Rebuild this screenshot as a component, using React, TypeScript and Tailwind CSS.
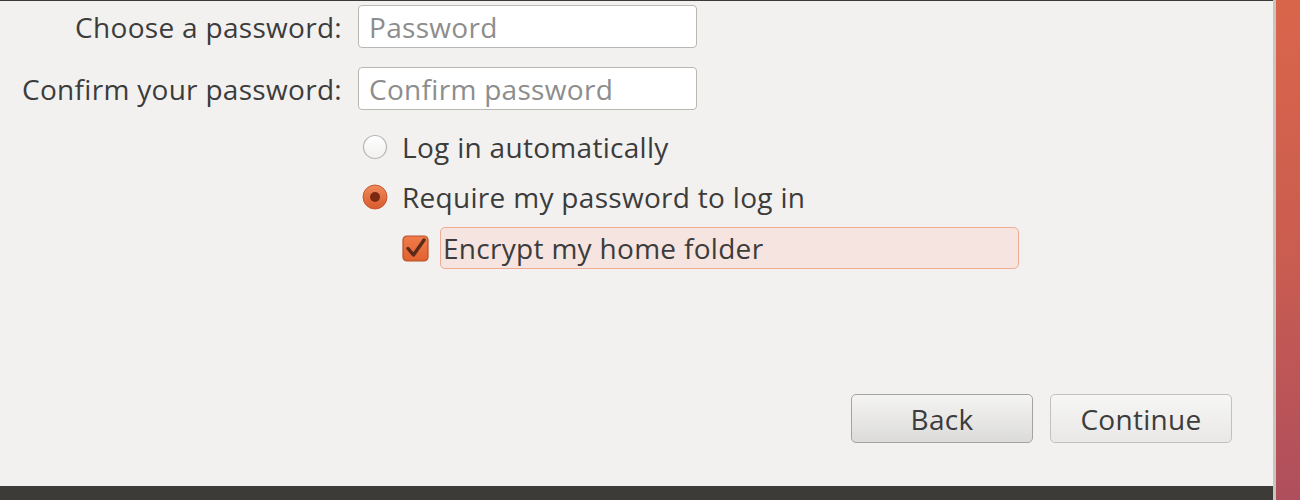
import React from "react";

const font = { fontFamily: '"Open Sans", "Noto Sans", sans-serif' };

function Radio({ checked }: { checked?: boolean }) {
  return checked ? (
    <svg width="26" height="26" viewBox="0 0 26 26">
      <defs>
        <linearGradient id="rg" x1="0" y1="0" x2="0" y2="1">
          <stop offset="0" stopColor="#f08a5e" />
          <stop offset="1" stopColor="#d85a2c" />
        </linearGradient>
      </defs>
      <circle cx="13" cy="13" r="12" fill="url(#rg)" stroke="#c8572d" strokeWidth="1" />
      <circle cx="13" cy="13" r="5" fill="#7b2a12" />
    </svg>
  ) : (
    <svg width="26" height="26" viewBox="0 0 26 26">
      <defs>
        <linearGradient id="wg" x1="0" y1="0" x2="0" y2="1">
          <stop offset="0" stopColor="#ffffff" />
          <stop offset="1" stopColor="#f1f0ef" />
        </linearGradient>
      </defs>
      <circle cx="13" cy="13" r="11.5" fill="url(#wg)" stroke="#b8b6b2" strokeWidth="1.2" />
    </svg>
  );
}

function Checkbox() {
  return (
    <svg width="27" height="27" viewBox="0 0 27 27">
      <defs>
        <linearGradient id="cg" x1="0" y1="0" x2="0" y2="1">
          <stop offset="0" stopColor="#f27b4b" />
          <stop offset="1" stopColor="#e0622f" />
        </linearGradient>
      </defs>
      <rect x="1" y="1" width="25" height="25" rx="4" fill="url(#cg)" stroke="#b4502a" strokeWidth="1.2" />
      <path d="M6 13.5 L11.5 20 L22 5" fill="none" stroke="#5b2a19" strokeWidth="3.4" strokeLinecap="round" strokeLinejoin="round" />
    </svg>
  );
}

export default function App() {
  return (
    <div className="w-[1300px] h-[500px] flex overflow-hidden text-[#3c3c3c]" style={font}>
      <div className="w-[1273px] flex flex-col bg-[#f2f1f0] border-t border-[#3c3b37]">
        <div className="flex-1 flex flex-col">
          <div className="grid grid-cols-[342px_339px] gap-x-4 gap-y-[19px] pt-1 items-center">
            <div className="text-right text-[28px] tracking-[0.3px] leading-none">Choose a password:</div>
            <div className="h-[43px] rounded-[4px] border border-[#b9b7b4] bg-white flex items-center px-[10px] text-[28px] tracking-[0.3px] text-[#8d8d8d]">
              Password
            </div>
            <div className="text-right text-[28px] tracking-[0.3px] leading-none">Confirm your password:</div>
            <div className="h-[43px] rounded-[4px] border border-[#b9b7b4] bg-white flex items-center px-[10px] text-[28px] tracking-[0.3px] text-[#8d8d8d]">
              Confirm password
            </div>
          </div>
          <div className="pl-[362px] pt-[24px] flex flex-col">
            <div className="flex items-center gap-[14px] h-[26px] text-[28px] tracking-[0.3px]">
              <Radio />
              <span>Log in automatically</span>
            </div>
            <div className="flex items-center gap-[14px] h-[26px] mt-[24px] text-[28px] tracking-[0.3px]">
              <Radio checked />
              <span>Require my password to log in</span>
            </div>
            <div className="flex items-center gap-[11px] mt-[17px] pl-[40px]">
              <Checkbox />
              <div className="w-[579px] h-[42px] rounded-[5px] border border-[#efac95] bg-[#f5e4df] flex items-center px-[2px] text-[28px] tracking-[0.3px]">
                Encrypt my home folder
              </div>
            </div>
          </div>
          <div className="mt-auto flex justify-end gap-[17px] pr-[41px] pb-[43px]">
            <div className="w-[182px] h-[49px] rounded-[5px] border border-[#a4a3a1] bg-gradient-to-b from-[#f4f4f3] to-[#dcdbda] flex items-center justify-center text-[28px] tracking-[0.3px]">
              Back
            </div>
            <div className="w-[182px] h-[49px] rounded-[5px] border border-[#c2c1bf] bg-gradient-to-b from-[#f6f6f5] to-[#e9e8e7] flex items-center justify-center text-[28px] tracking-[0.3px]">
              Continue
            </div>
          </div>
        </div>
        <div className="h-[14px] bg-[#3c3b37]" />
      </div>
      <div className="w-[3px] bg-[#c9c4c0]" />
      <div className="flex-1 bg-gradient-to-b from-[#d9654a] via-[#cb5d50] to-[#af4e5c]" />
    </div>
  );
}
